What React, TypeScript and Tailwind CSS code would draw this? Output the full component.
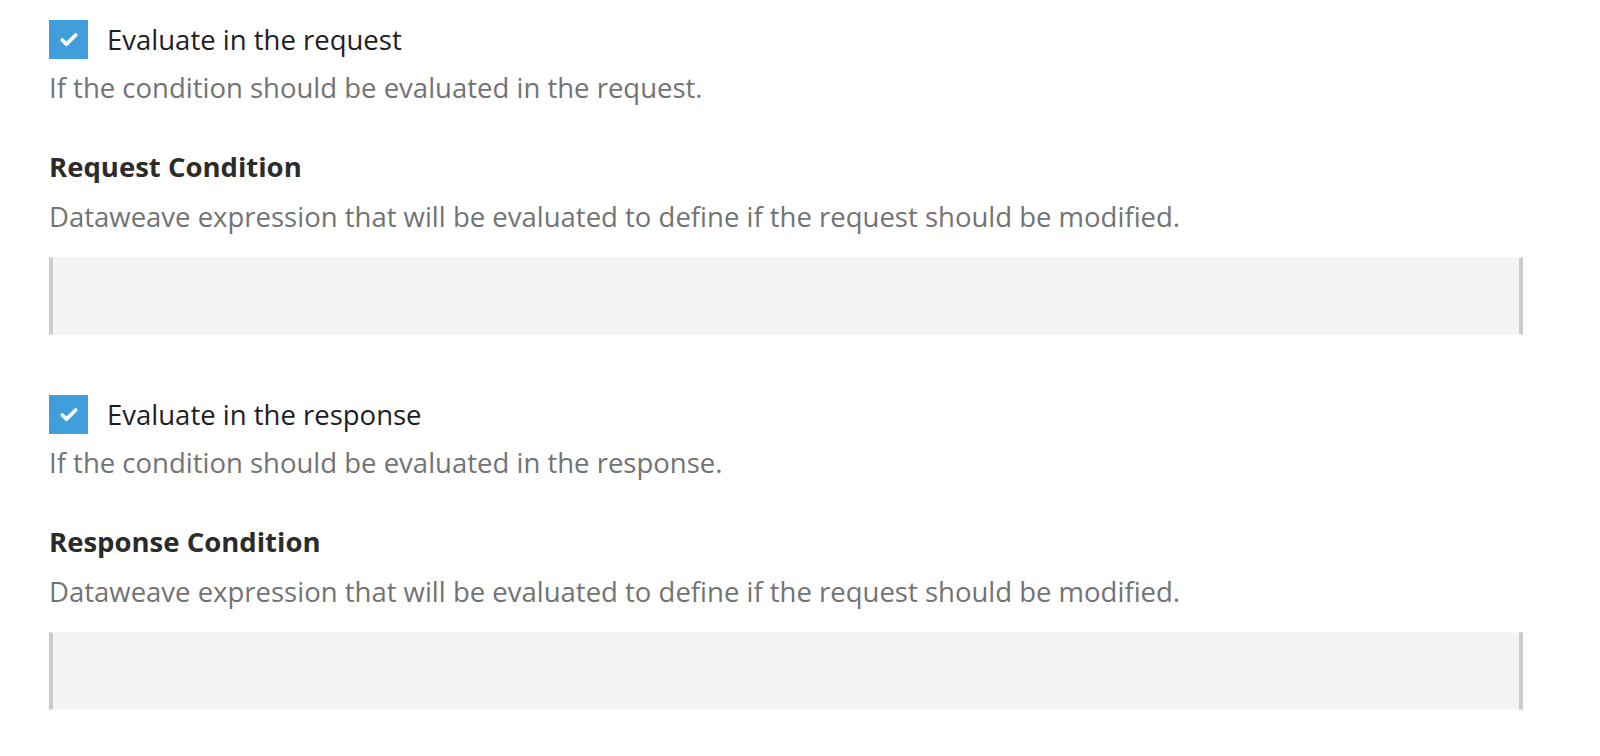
import { Check } from 'lucide-react';

type Section = {
  id: string;
  label: string;
  hint: string;
  title: string;
};

const sections: Section[] = [
  {
    id: 'request',
    label: 'Evaluate in the request',
    hint: 'If the condition should be evaluated in the request.',
    title: 'Request Condition',
  },
  {
    id: 'response',
    label: 'Evaluate in the response',
    hint: 'If the condition should be evaluated in the response.',
    title: 'Response Condition',
  },
];

function ConditionField({ section }: { section: Section }) {
  return (
    <div className="flex flex-col">
      <label className="flex items-center gap-[19px]">
        <span className="flex h-[39px] w-[39px] items-center justify-center bg-[#3f9edb]">
          <Check className="h-[20px] w-[20px] text-white" strokeWidth={4.5} />
        </span>
        <span className="text-[#1e1e1e]">{section.label}</span>
      </label>
      <p className="mt-[9px] text-[#737373]">{section.hint}</p>
      <h3 className="mt-[40px] font-bold text-[#2b2b2b]">{section.title}</h3>
      <p className="mt-[11px] text-[#737373]">
        Dataweave expression that will be evaluated to define if the request should be modified.
      </p>
      <textarea
        className="mt-[21px] h-[78px] w-[1474px] resize-none border-x-4 border-y border-x-[#cbcbcb] border-y-[#f7f7f8] bg-[#f3f4f6] outline-none"
        aria-label={section.title}
      />
    </div>
  );
}

export default function App() {
  return (
    <div className="min-h-screen bg-white pl-[49px] pt-[20px] font-['Open_Sans',sans-serif] text-[27.5px] leading-[39px]">
      <div className="flex flex-col gap-[60px]">
        {sections.map((section) => (
          <ConditionField key={section.id} section={section} />
        ))}
      </div>
    </div>
  );
}
